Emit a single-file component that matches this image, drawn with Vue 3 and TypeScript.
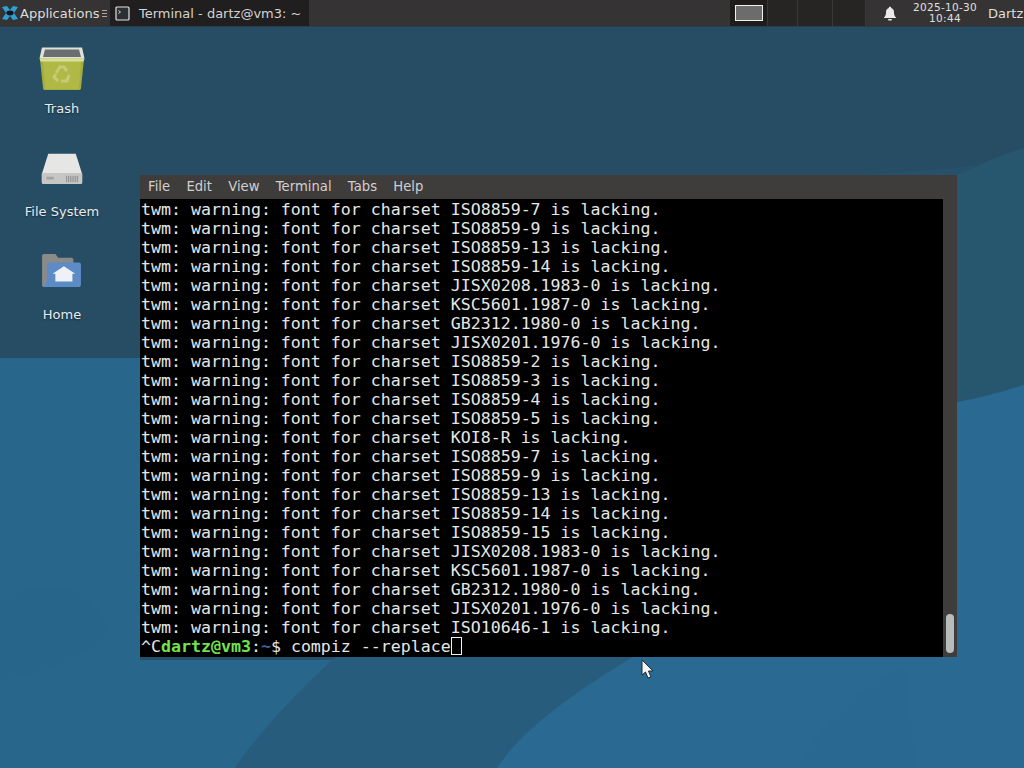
<script setup lang="ts">
const menus: string[] = ['File', 'Edit', 'View', 'Terminal', 'Tabs', 'Help']
const charsets: string[] = [
  'ISO8859-7', 'ISO8859-9', 'ISO8859-13', 'ISO8859-14', 'JISX0208.1983-0', 'KSC5601.1987-0',
  'GB2312.1980-0', 'JISX0201.1976-0', 'ISO8859-2', 'ISO8859-3', 'ISO8859-4', 'ISO8859-5',
  'KOI8-R', 'ISO8859-7', 'ISO8859-9', 'ISO8859-13', 'ISO8859-14', 'ISO8859-15',
  'JISX0208.1983-0', 'KSC5601.1987-0', 'GB2312.1980-0', 'JISX0201.1976-0', 'ISO10646-1'
]
const lines = charsets.map((c) => `twm: warning: font for charset ${c} is lacking.`)
</script>

<template>
  <div class="desktop">
    <svg class="wallpaper" width="1024" height="768" viewBox="0 0 1024 768" aria-hidden="true">
      <rect width="1024" height="768" fill="#27506a" />
      <path d="M0 26H612C540 62 440 110 320 168C220 215 140 240 0 250Z" fill="#2a4e61" />
      <path d="M0 26H1024V160C900 175 800 178 700 178H140V358H0Z" fill="#274d64" />
      <path d="M957 175C980 165 1000 155 1024 148V392L957 402Z" fill="#27566f" />
      <path d="M0 358H140V660H957V402C980 398 1000 392 1024 385V768H0Z" fill="#28678b" />
      <path d="M497 768C525 725 580 690 632 657H957V402C985 397 1005 392 1024 385V768Z" fill="#2a6a92" />
      <path d="M335 657H632C580 690 525 725 497 768H235C260 730 300 690 335 657Z" fill="#275c7d" />
      <path d="M0 600C60 570 100 600 108 630C95 650 70 668 0 680Z" fill="#27618a" opacity="0.2" />
      <path d="M800 768C815 730 850 690 905 668L915 768Z" fill="#27618a" opacity="0.15" />
    </svg>

    <header class="panel">
      <div class="apps">
        <svg class="logo" width="18" height="18" viewBox="0 0 18 18" aria-hidden="true">
          <path d="M1 3L6 2L9 6L12 2L17 3L13 9L17 15L12 16L9 12L6 16L1 15L5 9Z" fill="#2f9fd4" />
          <ellipse cx="9" cy="9" rx="3.6" ry="2.4" fill="#10161a" />
        </svg>
        <span class="apps-label">Applications</span>
        <span class="grip">
          <i></i><i></i><i></i>
        </span>
      </div>
      <div class="task">
        <svg width="15" height="15" viewBox="0 0 15 15" aria-hidden="true">
          <rect x="1" y="1" width="13" height="13" rx="1" fill="#2c3033" stroke="#dfe3e3" stroke-width="1.2" />
          <path d="M3.5 4.5L5.5 6L3.5 7.5" fill="none" stroke="#dfe3e3" stroke-width="0.9" />
        </svg>
        <span>Terminal - dartz@vm3: ~</span>
      </div>
      <div class="spacer"></div>
      <div class="pager">
        <div class="ws ws-active"><span class="mini"></span></div>
        <div class="ws ws-two"></div>
        <div class="ws ws-three"></div>
        <div class="ws ws-four"></div>
      </div>
      <div class="bell">
        <svg width="14" height="15" viewBox="0 0 14 15" aria-hidden="true">
          <path d="M7 0.8C7.8 0.8 8.2 1.3 8.2 2C10.4 2.6 11 4.4 11 6.6C11 9 11.6 10.2 13 11.4V12H1V11.4C2.4 10.2 3 9 3 6.6C3 4.4 3.6 2.6 5.8 2C5.8 1.3 6.2 0.8 7 0.8Z" fill="#eceaea" />
          <rect x="5" y="13" width="4" height="1.6" rx="0.8" fill="#eceaea" />
        </svg>
      </div>
      <div class="clock">
        <span>2025-10-30</span>
        <span>10:44</span>
      </div>
      <div class="user"><span>Dartz</span></div>
    </header>

    <div class="icons">
      <div class="icon trash-item">
        <svg width="48" height="46" viewBox="0 0 48 46" aria-hidden="true">
          <path d="M4 2H44L46 13L43 42C43 43.5 42 44 41 44H7C6 44 5 43.5 5 42L2 13Z" fill="#a3ad3d" />
          <path d="M5 15L7 43H41L43 15Z" fill="#b0b846" />
          <path d="M4 1.500H44L46.500 12.500H1.500Z" fill="#dfe2d8" />
          <path d="M7 3.500H41L43 11H5Z" fill="#6b6e70" />
          <path d="M1.500 12.500H46.500L45.500 15.500H2.500Z" fill="#d9de9a" />
          <g fill="none" stroke="#c6cb74" stroke-width="3">
            <path d="M18 27L22 21H26L29 25" />
            <path d="M31 29L29 35H23" />
            <path d="M20 35L16 31L18 28" />
          </g>
        </svg>
        <span class="icon-label">Trash</span>
      </div>
      <div class="icon fs-item">
        <svg width="44" height="33" viewBox="0 0 46 36" aria-hidden="true">
          <path d="M8 2H38L45 24V33C45 34 44 35 43 35H3C2 35 1 34 1 33V24Z" fill="#e6e6e4" />
          <path d="M1 23H45V33C45 34 44 35 43 35H3C2 35 1 34 1 33Z" fill="#c6c7c4" />
          <rect x="6" y="27" width="8" height="3" fill="#a3a4a1" />
          <path d="M28 26V33M30 26V33M32 26V33M34 26V33M36 26V33M38 26V33M40 26V33" stroke="#8c8d8a" stroke-width="1" />
        </svg>
        <span class="icon-label">File System</span>
      </div>
      <div class="icon home-item">
        <svg width="42" height="36" viewBox="0 0 44 38" aria-hidden="true">
          <path d="M1 3C1 2 2 1 3 1H15L18 5H32C33 5 34 6 34 7V36H3C2 36 1 35 1 34Z" fill="#8a8b88" />
          <path d="M6 12C6 11 7 10 8 10H40C41 10 42 11 42 12V33C42 35 41 36 39 36H3C2 36 2 35 3 34C5 32 6 30 6 28Z" fill="#5d8bc6" />
          <path d="M24 14L36 22H33V30H15V22H12Z" fill="#eef2f6" />
        </svg>
        <span class="icon-label">Home</span>
      </div>
    </div>

    <section class="window">
      <nav class="menubar">
        <span v-for="m in menus" :key="m">{{ m }}</span>
      </nav>
      <div class="term-body">
        <div class="screen">
          <div v-for="(line, i) in lines" :key="i" class="row">{{ line }}</div>
          <div class="row">^C<b class="host">dartz@vm3</b>:<b class="tilde">~</b>$ compiz --replace<span class="caret"></span></div>
        </div>
        <div class="scroll"><div class="thumb"></div></div>
      </div>
    </section>

    <svg class="cursor" width="14" height="21" viewBox="0 0 14 21" aria-hidden="true">
      <path d="M1 1V16L4.500 13L7 19L10 18L7.500 12H12Z" fill="#f2f4f5" stroke="#1b2a33" stroke-width="1" />
    </svg>
  </div>
</template>

<style scoped>
.desktop {
  position: relative;
  width: 1024px;
  height: 768px;
  overflow: hidden;
  font-family: "DejaVu Sans", sans-serif;
}
.wallpaper {
  position: absolute;
  inset: 0;
}
.panel {
  position: relative;
  display: flex;
  align-items: stretch;
  height: 26px;
  background: #353333;
  color: #e4e4e4;
  font-size: 13px;
  border-bottom: 1px solid #2b3d48;
  box-sizing: content-box;
}
.apps {
  display: flex;
  align-items: center;
  width: 110px;
  flex: none;
  padding-left: 1px;
  box-sizing: border-box;
}
.logo {
  flex: none;
}
.apps-label {
  margin-left: 1px;
  font-size: 13px;
  white-space: nowrap;
  color: #dcdcdc;
}
.grip {
  display: flex;
  flex-direction: column;
  gap: 2px;
  margin-left: 3px;
}
.grip i {
  display: block;
  width: 5px;
  height: 1px;
  background: #a8a8a8;
}
.task {
  display: flex;
  align-items: center;
  gap: 9px;
  width: 199px;
  flex: none;
  padding-left: 5px;
  box-sizing: border-box;
  background: #201e1e;
  white-space: nowrap;
  color: #d4d4d4;
}
.spacer {
  flex: 1;
}
.pager {
  display: flex;
  width: 136px;
  flex: none;
  background: #272524;
}
.ws {
  border-right: 1px solid #3a3835;
  box-sizing: border-box;
}
.ws-active {
  width: 38px;
  background: #1f1d1c;
  display: flex;
  align-items: center;
  justify-content: center;
}
.ws-two {
  width: 30px;
}
.ws-three {
  width: 35px;
}
.ws-four {
  width: 33px;
}
.mini {
  display: block;
  width: 28px;
  height: 16px;
  box-sizing: border-box;
  background: #6c6c6c;
  border: 1px solid #f0f0f0;
}
.bell {
  width: 47px;
  flex: none;
  display: flex;
  align-items: center;
  justify-content: center;
}
.clock {
  display: flex;
  flex-direction: column;
  align-items: center;
  justify-content: center;
  width: 64px;
  flex: none;
  font-size: 10.500px;
  line-height: 11px;
  letter-spacing: 0.300px;
  color: #e0e0e0;
  white-space: nowrap;
}
.user {
  flex: none;
  width: 47px;
  padding-left: 11px;
  box-sizing: border-box;
  display: flex;
  align-items: center;
  font-size: 13px;
  color: #dedede;
  white-space: nowrap;
}
.icons {
  position: absolute;
  left: 0;
  top: 27px;
  width: 124px;
  display: flex;
  flex-direction: column;
}
.icon {
  display: flex;
  flex-direction: column;
  align-items: center;
  height: 103px;
  box-sizing: border-box;
}
.trash-item {
  padding-top: 19px;
}
.fs-item {
  padding-top: 22px;
}
.home-item {
  padding-top: 20px;
}
.icon-label {
  margin-top: 9px;
  font-size: 13px;
  line-height: 16px;
  color: #e6ecef;
  text-shadow: 0 1px 2px rgba(0, 0, 0, 0.55);
  white-space: nowrap;
}
.fs-item .icon-label {
  margin-top: 19px;
}
.home-item .icon-label {
  margin-top: 18px;
}
.window {
  position: absolute;
  left: 140px;
  top: 175px;
  width: 817px;
  height: 482px;
  display: flex;
  flex-direction: column;
  background: #3f3c3c;
}
.menubar {
  display: flex;
  gap: 16.300px;
  align-items: center;
  height: 24px;
  padding: 0 0 2px 8px;
  box-sizing: border-box;
  flex: none;
  font-size: 13.200px;
  color: #d0d0d0;
}
.term-body {
  flex: 1;
  display: flex;
  min-height: 0;
}
.screen {
  width: 803px;
  flex: none;
  background: #000;
  color: #e6e6e4;
  font-family: "DejaVu Sans Mono", monospace;
  font-size: 16.600px;
  line-height: 19px;
  padding: 1px 0 0 1px;
  box-sizing: border-box;
  white-space: pre;
  overflow: hidden;
}
.row {
  height: 19px;
}
.host {
  color: #75e24c;
  font-weight: bold;
}
.tilde {
  color: #3465a4;
  font-weight: bold;
}
.caret {
  display: inline-block;
  width: 11px;
  height: 18px;
  box-sizing: border-box;
  border: 1px solid #f2f2f2;
  vertical-align: -3px;
}
.scroll {
  flex: 1;
  display: flex;
  justify-content: center;
  align-items: flex-end;
  padding-bottom: 4px;
}
.thumb {
  width: 8px;
  height: 39px;
  border-radius: 4px;
  background: #b9bcbc;
}
.cursor {
  position: absolute;
  left: 641px;
  top: 659px;
}
</style>
